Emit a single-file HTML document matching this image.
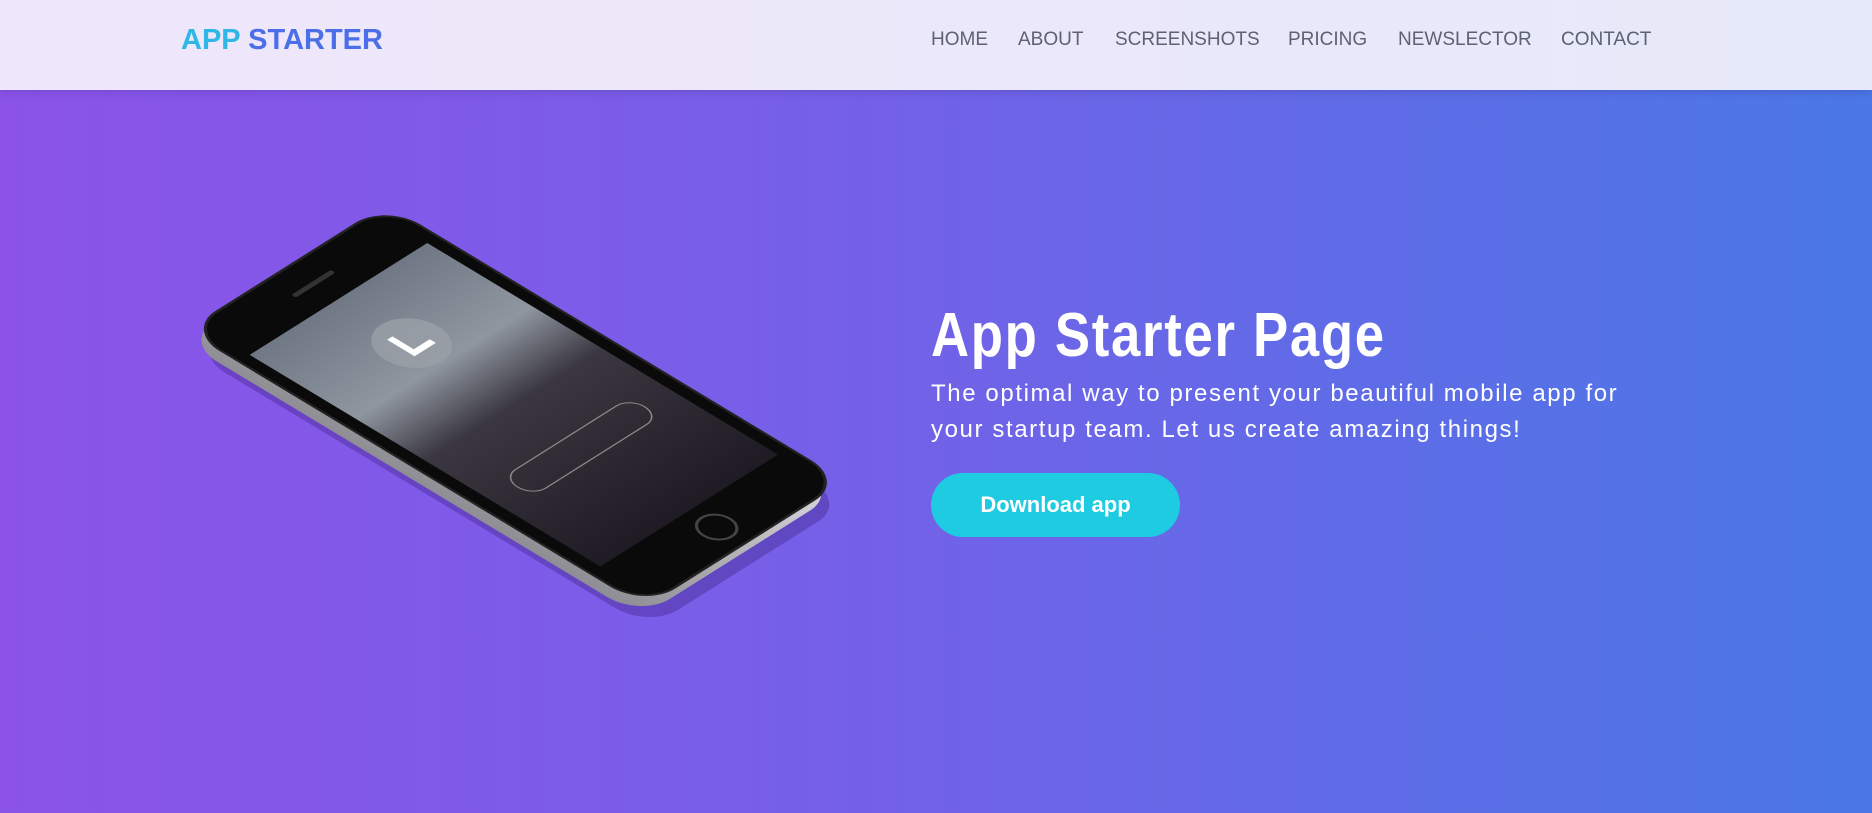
<!DOCTYPE html>
<html><head><meta charset="utf-8">
<style>
*{margin:0;padding:0;box-sizing:border-box}
html,body{width:1872px;height:813px;overflow:hidden}
body{font-family:"Liberation Sans",Arial,sans-serif;background:linear-gradient(90deg,#8b53e8 0%,#7560e8 45%,#4a78e6 100%);position:relative}
.nav{position:absolute;left:0;top:0;width:1872px;height:90px;background:linear-gradient(90deg,#efe7fb,#e6e9f9);box-shadow:0 2px 8px rgba(60,40,120,.25);z-index:2}
.logo{position:absolute;left:181px;top:24px;font-size:29px;font-weight:bold;color:#4c6ee8;letter-spacing:0}
.logo span{color:#2fb7e6}
.menu{position:absolute;top:29px;left:931px;font-size:19px;color:#5d6175;white-space:nowrap}
.menu a{position:absolute;top:0}
h1{position:absolute;left:931px;top:300px;font-size:62px;font-weight:bold;color:#fff;letter-spacing:2px;transform:scaleX(.85);transform-origin:left top;white-space:nowrap}
p{position:absolute;left:931px;top:376px;width:720px;font-size:24px;line-height:36px;color:#fff;letter-spacing:1.6px}
.btn{position:absolute;left:931px;top:473px;width:249px;height:64px;border-radius:32px;background:#1ecbe1;color:#fff;font-weight:bold;font-size:22px;text-align:center;line-height:64px}
svg{position:absolute;left:0;top:0}
</style></head><body>
<div class="nav">
<div class="logo"><span>APP</span> STARTER</div>
<div class="menu">
<a style="left:0">HOME</a><a style="left:87px">ABOUT</a><a style="left:184px">SCREENSHOTS</a><a style="left:357px">PRICING</a><a style="left:467px">NEWSLECTOR</a><a style="left:630px">CONTACT</a>
</div>
</div>
<svg width="1000" height="813" viewBox="0 0 1000 813">
<defs>
<linearGradient id="sg" x1="0" y1="0" x2="0" y2="1">
<stop offset="0" stop-color="#6f7884"/><stop offset=".3" stop-color="#8f96a0"/><stop offset=".5" stop-color="#3a3740"/><stop offset="1" stop-color="#1f1b24"/>
</linearGradient>
<linearGradient id="rim" x1="0" y1="0" x2="1" y2="0">
<stop offset="0" stop-color="#d8d8dc"/><stop offset="1" stop-color="#8e8e94"/>
</linearGradient>
</defs>
<g transform="translate(4,22)" opacity=".35">
<g transform="matrix(-2.65,1.67,3.05,1.84,386,205)"><rect x="0" y="0" width="75" height="150" rx="11" fill="#3a1e80"/></g>
</g>
<g transform="translate(-4,11)">
<g transform="matrix(-2.65,1.67,3.05,1.84,386,205)"><rect x="0" y="0" width="75" height="150" rx="11" fill="url(#rim)"/></g>
</g>
<g transform="matrix(-2.65,1.67,3.05,1.84,386,205)">
<rect x="0" y="0" width="75" height="150" rx="11" fill="#0a0a0a" stroke="#222" stroke-width=".8"/>
<rect x="4" y="17" width="67" height="115" fill="url(#sg)"/>
<ellipse cx="37.5" cy="41" rx="10" ry="10" fill="#9aa0a8" opacity=".8"/>
<path d="M33 44 L40 44 L40 36" stroke="#fff" stroke-width="2" fill="none"/>
<rect x="14" y="92" width="48" height="10" rx="5" fill="none" stroke="#888" stroke-width=".4"/>
<circle cx="37.5" cy="141" r="5" fill="none" stroke="#444" stroke-width=".8"/>
<rect x="30" y="8" width="15" height="1.5" rx=".7" fill="#333"/>
</g>
</svg>
<h1>App Starter Page</h1>
<p>The optimal way to present your beautiful mobile app for your startup team. Let us create amazing things!</p>
<div class="btn">Download app</div>
</body></html>
